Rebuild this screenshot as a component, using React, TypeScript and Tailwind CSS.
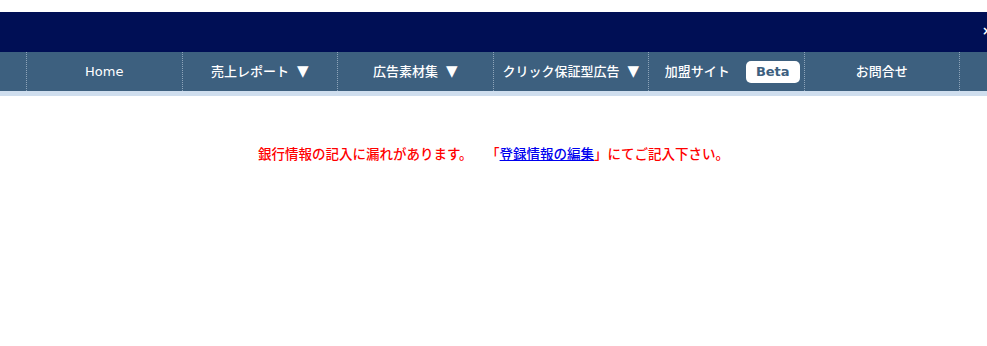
const navFont = {
  fontFamily: '"DejaVu Sans", "Noto Sans CJK JP", sans-serif',
};

function NavItem({
  label,
  arrow,
  beta,
}: {
  label: string;
  arrow?: boolean;
  beta?: boolean;
}) {
  return (
    <div
      className={`flex h-full w-[155.5px] shrink-0 items-center justify-center border-l border-dotted border-[#8ea5ba] text-[13px] font-medium text-white ${
        beta ? "pl-[12px]" : ""
      }`}
    >
      <span>{label}</span>
      {arrow && <span className="ml-2 text-[15px] leading-none">▼</span>}
      {beta && (
        <span className="ml-[16px] flex h-[22px] w-[54px] items-center justify-center rounded-[5px] bg-white text-[13px] font-bold text-[#3d5f7f]">
          Beta
        </span>
      )}
    </div>
  );
}

export default function App() {
  return (
    <div className="relative h-[346px] w-[987px] overflow-hidden bg-white" style={navFont}>
      <div className="h-[12px]" />
      <div className="relative h-[40px] bg-[#000f55]">
        <span className="absolute left-[982px] top-[13px] text-[12px] font-bold leading-none text-white">
          ×
        </span>
      </div>
      <nav className="flex h-[39px] bg-[#3d607f] pl-[26px]">
        <NavItem label="Home" />
        <NavItem label="売上レポート" arrow />
        <NavItem label="広告素材集" arrow />
        <NavItem label="クリック保証型広告" arrow />
        <NavItem label="加盟サイト" beta />
        <NavItem label="お問合せ" />
        <div className="h-full border-l border-dotted border-[#8ea5ba]" />
      </nav>
      <div className="h-[5px] bg-[#cfdeee]" />
      <div className="flex justify-center pt-[47px]">
        <p
          className="text-[13.5px] font-medium leading-[20px] text-[#ff0000] [text-spacing-trim:space-all]"
          style={{ fontFamily: '"Noto Sans CJK JP", sans-serif' }}
        >
          銀行情報の記入に漏れがあります。　「
          <a href="#" className="text-[#0000ee] underline">
            登録情報の編集
          </a>
          」にてご記入下さい。
        </p>
      </div>
    </div>
  );
}
